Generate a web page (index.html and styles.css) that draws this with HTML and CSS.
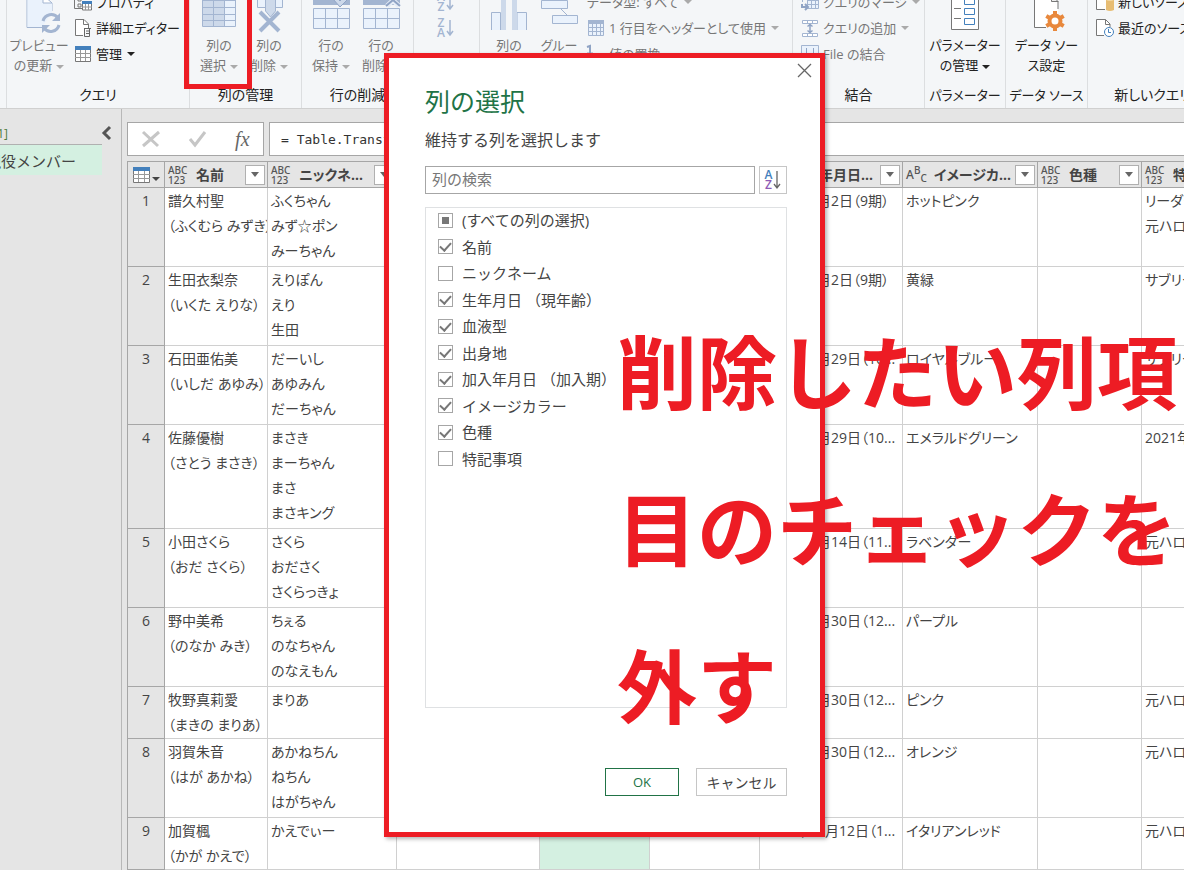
FILE: index.html
```html
<!DOCTYPE html>
<html lang="ja">
<head>
    <meta charset="UTF-8">
    <meta name="viewport" content="width=device-width, initial-scale=1.0">
    <title>Power Query エディター</title>
    <link rel="stylesheet" href="styles.css">
</head>
<body>
    <div class="ribbon">
        <div class="group group-query">
            <div class="group-body">
                <button class="big disabled">
                    <svg width="36" height="40" viewBox="0 0 36 40"><path d="M6 0V32.500H21M22 0v8h9v8" fill="#eaf2fc" stroke="#a3b5d1"/><path d="M6.500 0H22l9 8v10l-10 14H6.500z" fill="#eaf2fc"/><path d="M22 0L31 8H22z" fill="#fff" stroke="#a3b5d1"/><path d="M22 26a8.500 8.500 0 0 1 15-3M38 30a8.500 8.500 0 0 1-15 3" fill="none" stroke="#a3b5d1" stroke-width="3"/><path d="M39 18v8h-8zM21 38v-8h8z" fill="#a3b5d1"/></svg>
                    <span>プレビュー</span><span>の更新<i class="arrow"></i></span>
                </button>
                <div class="small-list">
                    <button class="small"><svg width="18" height="18" viewBox="0 0 18 18"><path d="M.5 0v15.500H8M4 5h3v3H4zM4 11h3v3H4z" fill="none" stroke="#777"/><path d="M8.500 9h9v8h-9z" fill="#fff" stroke="#777"/><path d="M8 8h10v3H8z" fill="#4380bc"/><path d="M11.500 11v6M14.500 11v6M8 14h10" stroke="#999"/></svg>プロパティ</button>
                    <button class="small"><svg width="18" height="18" viewBox="0 0 18 18"><path d="M9 16.500H1.500v-16H10L14.500 5v4" fill="#fff" stroke="#777"/><path d="M9.500.5v5h5" fill="none" stroke="#777"/><path d="M10 9.500h7M10.500 9.500v8h5v-8M12 12h3M12 14.500h3" fill="none" stroke="#666"/></svg>詳細エディター</button>
                    <button class="small"><svg width="18" height="18" viewBox="0 0 18 18"><path d="M1.500 1.500h15v15h-15z" fill="#fff" stroke="#777"/><path d="M1 1h16v4H1z" fill="#4380bc"/><path d="M6.500 5v11M11.500 5v11M1 8.500h16M1 12.500h16" stroke="#999"/></svg>管理<i class="arrow"></i></button>
                </div>
            </div>
            <div class="group-name">クエリ</div>
        </div>
        <div class="group group-columns">
            <div class="group-body">
                <button class="big disabled">
                    <svg width="36" height="40" viewBox="0 0 36 40"><path d="M1.500 0h33v31.500h-33z" fill="#eaf2fc"/><path d="M2 0h21v31H2z" fill="#cdd9ea"/><path d="M1.500 0v31.500h33V0M12.500 0v31M23.500 0v31M1 5.500h34M1 12.500h34M1 19.500h34M1 25.500h34" fill="none" stroke="#a3b5d1"/></svg>
                    <span>列の</span><span>選択<i class="arrow"></i></span>
                </button>
                <button class="big disabled">
                    <svg width="36" height="40" viewBox="0 0 36 40"><path d="M6.500 0v12.500h25V0" fill="#eaf2fc" stroke="#a3b5d1"/><path d="M14.500 0v16l5 6 5-6V0z" fill="#cdd9ea" stroke="#a3b5d1"/><path d="M9 17l19 19M28 17L9 36" stroke="#a3b5d1" stroke-width="4"/></svg>
                    <span>列の</span><span>削除<i class="arrow"></i></span>
                </button>
            </div>
            <div class="group-name">列の管理</div>
        </div>
        <div class="group group-rows">
            <div class="group-body">
                <button class="big disabled">
                    <svg width="38" height="40" viewBox="0 0 38 40"><path d="M1 0h37v10H1z" fill="#a3b5d1"/><path d="M21 4l7 8 8-8-3-3-5 5-4-4z" fill="#cdd9ea" stroke="#8fa3c4"/><path d="M1.500 13.500h36v20h-36zM13.500 13v20M25.500 13v20M1 23.500h37" fill="#eaf2fc" stroke="#a3b5d1"/></svg>
                    <span>行の</span><span>保持<i class="arrow"></i></span>
                </button>
                <button class="big disabled">
                    <svg width="38" height="40" viewBox="0 0 38 40"><path d="M1 0h37v10H1z" fill="#a3b5d1"/><path d="M25 11l12-11M25 0l12 11" stroke="#e6edf7" stroke-width="5"/><path d="M24 11l7-6 7 6" fill="none" stroke="#8fa3c4" stroke-width="2"/><path d="M1.500 13.500h36v20h-36zM13.500 13v20M25.500 13v20M1 23.500h37" fill="#eaf2fc" stroke="#a3b5d1"/></svg>
                    <span>行の</span><span>削除<i class="arrow"></i></span>
                </button>
            </div>
            <div class="group-name">行の削減</div>
        </div>
        <div class="group group-sort">
            <div class="group-body">
                <div class="sort-list">
                    <button class="sort disabled"><span class="az"><b>A</b><b>Z</b></span><svg width="8" height="18" viewBox="0 0 8 18"><path d="M4 1v15M1 12l3 4 3-4" fill="none" stroke="#a3b5d1" stroke-width="1.500"/></svg></button>
                    <button class="sort disabled"><span class="az"><b>Z</b><b>A</b></span><svg width="8" height="18" viewBox="0 0 8 18"><path d="M4 1v15M1 12l3 4 3-4" fill="none" stroke="#a3b5d1" stroke-width="1.500"/></svg></button>
                </div>
            </div>
            <div class="group-name"></div>
        </div>
        <div class="group group-transform">
            <div class="group-body">
                <button class="big disabled">
                    <svg width="38" height="40" viewBox="0 0 38 40"><path d="M1.500 35V17.500h9V35M27 35V17.500h9.500V35" fill="#eaf2fc" stroke="#a3b5d1"/><path d="M11 0h5v35h-5zM22 0h5v35h-5z" fill="#cdd9ea"/></svg>
                    <span>列の</span><span>分割<i class="arrow"></i></span>
                </button>
                <button class="big disabled">
                    <svg width="38" height="40" viewBox="0 0 38 40"><path d="M1.500 5.500h26v8h-26zM12.500 20.500h25v8h-25z" fill="#eaf2fc" stroke="#a3b5d1"/><path d="M21 14l6 6" stroke="#a3b5d1"/></svg>
                    <span>グルー</span><span>プ化</span>
                </button>
                <div class="small-list">
                    <button class="small disabled">データ型: すべて<i class="arrow"></i></button>
                    <button class="small disabled"><svg width="18" height="18" viewBox="0 0 18 18"><path d="M1.500 1.500h15v15h-15z" fill="#eaf2fc" stroke="#a3b5d1"/><path d="M1 1h16v4H1z" fill="#a3b5d1"/><path d="M5.500 5v11M9.500 5v11M13.500 5v11M1 8.500h16M1 12.500h16" stroke="#a3b5d1"/></svg>1 行目をヘッダーとして使用<i class="arrow"></i></button>
                    <button class="small disabled"><svg width="18" height="18" viewBox="0 0 18 18"><path d="M0 2l3-1v7M0 8.500h6" fill="none" stroke="#8fa3c4" stroke-width="2"/></svg>値の置換</button>
                </div>
            </div>
            <div class="group-name"></div>
        </div>
        <div class="group group-merge">
            <div class="group-body">
                <div class="small-list">
                    <button class="small disabled"><svg width="18" height="18" viewBox="0 0 18 18"><path d="M1.500 0v9M1 4.500h5M6.500 3.500h11v12h-11zM6 7.500h12M6 11.500h12M10.500 4v12M14.500 4v12" fill="#eaf2fc" stroke="#a3b5d1"/><path d="M1 11v3h6M4 11l3 3-3 3" fill="none" stroke="#8fa3c4" stroke-width="2"/></svg>クエリのマージ<i class="arrow"></i></button>
                    <button class="small disabled"><svg width="18" height="18" viewBox="0 0 18 18"><path d="M1.500 1.500h15v3h-15zM1.500 14.500h15v3h-15zM6.500 2v2M11.500 2v2M6.500 15v2M11.500 15v2" fill="#fff" stroke="#a3b5d1"/><path d="M9 5v9M6.500 7.500L9 5.500l2.500 2M6.500 11.500l2.500 2 2.500-2" fill="none" stroke="#8fa3c4" stroke-width="1.500"/></svg>クエリの追加<i class="arrow"></i></button>
                    <button class="small disabled"><svg width="18" height="18" viewBox="0 0 18 18"><path d="M.5.5h17v17H.5z" fill="#eaf2fc" stroke="#a3b5d1"/><path d="M5.500 3v6M12.500 3v6M5 9l4 3 4-3" fill="none" stroke="#8fa3c4"/></svg>File の結合</button>
                </div>
            </div>
            <div class="group-name">結合</div>
        </div>
        <div class="group group-parameter">
            <div class="group-body">
                <button class="big">
                    <svg width="36" height="40" viewBox="0 0 36 40"><path d="M4.500 0v34.500h27V0" fill="#fff" stroke="#777"/><path d="M7 13.500h7M7 23.500h7" stroke="#777"/><path d="M17.500 3.500h10v6h-10zM17.500 13.500h10v6h-10zM17.500 23.500h10v6h-10z" fill="#fff" stroke="#4380bc"/></svg>
                    <span>パラメーター</span><span>の管理<i class="arrow"></i></span>
                </button>
            </div>
            <div class="group-name">パラメーター</div>
        </div>
        <div class="group group-source">
            <div class="group-body">
                <button class="big">
                    <svg width="36" height="40" viewBox="0 0 36 40"><path d="M6 0h16v7h7v25H6z" fill="#fff"/><path d="M5.500 0v32.500H17M29 6v8" fill="none" stroke="#777"/><path d="M22.500 0v6.500H29z" fill="#eee" stroke="#777"/><circle cx="26" cy="26" r="5.500" fill="#fff" stroke="#e8883c" stroke-width="4"/><path d="M26 16v5M26 31v5M17.300 21l4.400 2.500M30.300 28.500l4.400 2.500M17.300 31l4.400-2.500M30.300 23.500l4.400-2.500" stroke="#e8883c" stroke-width="4"/></svg>
                    <span>データ ソー</span><span>ス設定</span>
                </button>
            </div>
            <div class="group-name">データ ソース</div>
        </div>
        <div class="group group-new">
            <div class="group-body">
                <div class="small-list">
                    <button class="small"><svg width="18" height="18" viewBox="0 0 18 18"><path d="M.5 0v16.500H9" fill="none" stroke="#777"/><path d="M1 0h11v16H1z" fill="#fff"/><path d="M10 5h8v12q-4 2-8 0z" fill="#e7bd74"/><ellipse cx="14" cy="6" rx="4" ry="2" fill="#f3d9a5"/></svg>新しいソース<i class="arrow"></i></button>
                    <button class="small"><svg width="18" height="18" viewBox="0 0 18 18"><path d="M8 16.500H.5V.5h9L14 5v3" fill="#fff" stroke="#777"/><path d="M9.500.5v5H14" fill="none" stroke="#777"/><circle cx="13" cy="13" r="4.500" fill="#fff" stroke="#4380bc"/><path d="M12.500 10v3.500H15" fill="none" stroke="#4380bc"/></svg>最近のソース<i class="arrow"></i></button>
                    <span class="small"></span>
                </div>
            </div>
            <div class="group-name">新しいクエリ</div>
        </div>
    </div>

    <div class="workspace">
        <div class="sidebar">
            <div class="query-folder"><span>クエリ [1]</span></div>
            <button class="collapse" aria-label="折りたたむ"><svg width="10" height="14" viewBox="0 0 10 14"><path d="M8 1L2 7l6 6" fill="none" stroke="#555" stroke-width="3"/></svg></button>
            <div class="query-item"><span>現役メンバー</span></div>
        </div>
        <div class="content">
            <div class="formula-bar">
                <div class="formula-tools">
                    <button aria-label="取り消し"><svg width="20" height="18" viewBox="0 0 20 18"><path d="M2 2l15 14M18 2L2 16" stroke="#c6c6c6" stroke-width="3"/></svg></button>
                    <button aria-label="確定"><svg width="20" height="18" viewBox="0 0 20 18"><path d="M2 9l5 6L17 2" fill="none" stroke="#c6c6c6" stroke-width="3"/></svg></button>
                    <button class="fx">fx</button>
                </div>
                <input class="formula" type="text" value="= Table.TransformColumns" aria-label="数式">
            </div>
            <table class="grid">
                <colgroup>
                    <col class="c-no"><col class="c-name"><col class="c-nick"><col class="c-date"><col class="c-mid"><col class="c-mid"><col class="c-date"><col class="c-image"><col class="c-color"><col class="c-mid">
                </colgroup>
                <thead>
                    <tr>
                        <th><div class="head corner"><svg width="17" height="16" viewBox="0 0 17 16"><path d="M.5.5h16v15H.5z" fill="#fff" stroke="#777"/><path d="M0 0h17v4H0z" fill="#4380bc"/><path d="M5.500 4v11M11.500 4v11M0 7.500h17M0 11.500h17" stroke="#999"/></svg><i class="arrow"></i></div></th>
                        <th><div class="head"><span class="type">ABC<br>123</span><span class="title">名前</span><button class="filter" aria-label="フィルター"></button></div></th>
                        <th><div class="head"><span class="type">ABC<br>123</span><span class="title">ニックネ...</span><button class="filter" aria-label="フィルター"></button></div></th>
                        <th><div class="head"></div></th>
                        <th><div class="head"></div></th>
                        <th><div class="head"></div></th>
                        <th><div class="head"><span class="type">ABC<br>123</span><span class="title">加入年月日...</span><button class="filter" aria-label="フィルター"></button></div></th>
                        <th><div class="head"><span class="type text">A<sup>B</sup><sub>C</sub></span><span class="title">イメージカ...</span><button class="filter" aria-label="フィルター"></button></div></th>
                        <th><div class="head"><span class="type">ABC<br>123</span><span class="title">色種</span><button class="filter" aria-label="フィルター"></button></div></th>
                        <th><div class="head"><span class="type">ABC<br>123</span><span class="title">特記事項</span></div></th>
                    </tr>
                </thead>
                <tbody>
                    <tr class="lines-3"><th>1</th><td>譜久村聖<br>（ふくむら みずき）</td><td>ふくちゃん<br>みず☆ポン<br>みーちゃん</td><td></td><td class="selected"></td><td></td><td>2011年1月2日（9期）</td><td>ホットピンク</td><td></td><td>リーダー<br>元ハロプロ</td></tr>
                    <tr class="lines-3"><th>2</th><td>生田衣梨奈<br>（いくた えりな）</td><td>えりぽん<br>えり<br>生田</td><td></td><td class="selected"></td><td></td><td>2011年1月2日（9期）</td><td>黄緑</td><td></td><td>サブリーダー</td></tr>
                    <tr class="lines-3"><th>3</th><td>石田亜佑美<br>（いしだ あゆみ）</td><td>だーいし<br>あゆみん<br>だーちゃん</td><td></td><td class="selected"></td><td></td><td>2011年9月29日（10...</td><td>ロイヤルブルー</td><td></td><td>サブリーダー</td></tr>
                    <tr class="lines-4"><th>4</th><td>佐藤優樹<br>（さとう まさき）</td><td>まさき<br>まーちゃん<br>まさ<br>まさキング</td><td></td><td class="selected"></td><td></td><td>2011年9月29日（10...</td><td>エメラルドグリーン</td><td></td><td>2021年</td></tr>
                    <tr class="lines-3"><th>5</th><td>小田さくら<br>（おだ さくら）</td><td>さくら<br>おださく<br>さくらっきょ</td><td></td><td class="selected"></td><td></td><td>2012年9月14日（11...</td><td>ラベンダー</td><td></td><td>元ハロプロ</td></tr>
                    <tr class="lines-3"><th>6</th><td>野中美希<br>（のなか みき）</td><td>ちぇる<br>のなちゃん<br>のなえもん</td><td></td><td class="selected"></td><td></td><td>2014年9月30日（12...</td><td>パープル</td><td></td><td></td></tr>
                    <tr class="lines-2"><th>7</th><td>牧野真莉愛<br>（まきの まりあ）</td><td>まりあ</td><td></td><td class="selected"></td><td></td><td>2014年9月30日（12...</td><td>ピンク</td><td></td><td>元ハロプロ</td></tr>
                    <tr class="lines-3"><th>8</th><td>羽賀朱音<br>（はが あかね）</td><td>あかねちん<br>ねちん<br>はがちゃん</td><td></td><td class="selected"></td><td></td><td>2014年9月30日（12...</td><td>オレンジ</td><td></td><td>元ハロプロ</td></tr>
                    <tr class="lines-2"><th>9</th><td>加賀楓<br>（かが かえで）</td><td>かえでぃー</td><td></td><td class="selected"></td><td></td><td>2016年12月12日（1...</td><td>イタリアンレッド</td><td></td><td>元ハロプロ</td></tr>
                </tbody>
            </table>
        </div>
    </div>

    <div class="marker"></div>

    <div class="dialog" role="dialog" aria-labelledby="dialogTitle">
        <button class="close" aria-label="閉じる"><svg width="15" height="15" viewBox="0 0 15 15"><path d="M1 1l13 13M14 1L1 14" stroke="#666" stroke-width="1.300"/></svg></button>
        <h1 id="dialogTitle">列の選択</h1>
        <p>維持する列を選択します</p>
        <div class="search-row">
            <input class="search" type="text" placeholder="列の検索" aria-label="列の検索">
            <button class="sort-button" aria-label="並べ替え"><span class="az"><b>A</b><b>Z</b></span><svg width="8" height="18" viewBox="0 0 8 18"><path d="M4 0v17M1 13l3 4 3-4" fill="none" stroke="#666" stroke-width="1.300"/></svg></button>
        </div>
        <div class="column-list">
            <ul>
                <li><label><input type="checkbox" class="partial">(すべての列の選択)</label></li>
                <li><label><input type="checkbox" checked>名前</label></li>
                <li><label><input type="checkbox">ニックネーム</label></li>
                <li><label><input type="checkbox" checked>生年月日 （現年齢）</label></li>
                <li><label><input type="checkbox" checked>血液型</label></li>
                <li><label><input type="checkbox" checked>出身地</label></li>
                <li><label><input type="checkbox" checked>加入年月日 （加入期）</label></li>
                <li><label><input type="checkbox" checked>イメージカラー</label></li>
                <li><label><input type="checkbox" checked>色種</label></li>
                <li><label><input type="checkbox">特記事項</label></li>
            </ul>
        </div>
        <div class="actions">
            <button class="ok">OK</button>
            <button class="cancel">キャンセル</button>
        </div>
    </div>

    <div class="note">削除したい列項<br>目のチェックを<br>外す</div>
</body>
</html>
```
FILE: styles.css
```css
* {
    box-sizing: border-box;
}

body {
    margin: 0;
    height: 100vh;
    overflow: hidden;
    position: relative;
    display: flex;
    flex-direction: column;
    background-color: #e5e5e5;
    color: #444;
    font-family: "Open Sans", "Noto Sans CJK JP", sans-serif;
    font-size: 15px;
}

button {
    padding: 0;
    border: none;
    background: none;
    color: inherit;
    font: inherit;
    cursor: pointer;
}

svg {
    display: block;
    flex: none;
    overflow: visible;
}

.arrow {
    display: inline-block;
    flex: none;
    border: 4px solid transparent;
    border-top-color: currentColor;
    border-bottom: none;
    margin-left: 4px;
    vertical-align: middle;
}

/* ribbon */
.ribbon {
    display: flex;
    flex: none;
    padding-left: 6px;
    background-color: #f4f6f8;
    border-bottom: 1px solid #d0d0d0;
    color: #222;
    font-size: 13px;
    font-feature-settings: "palt";
    white-space: nowrap;
    overflow: hidden;
}

.group {
    flex: none;
    height: 108px;
    border-left: 1px solid #dcdee0;
    overflow: hidden;
}

.group-body {
    display: flex;
    align-items: flex-end;
    height: 85px;
}

.group-name {
    line-height: 20px;
    font-size: 14px;
    text-align: center;
}

.group-query { width: 183px; }
.group-columns, .group-rows { width: 112px; }
.group-sort { width: 66px; }
.group-transform { width: 313px; }
.group-merge { width: 132px; }
.group-parameter { width: 81px; }
.group-source { width: 82px; }
.group-new { width: 130px; }

.group-parameter .group-name, .group-source .group-name {
    font-size: 13px;
}

.big {
    display: flex;
    flex-direction: column;
    align-items: center;
    width: 50px;
    padding-bottom: 10px;
    line-height: 20px;
}

.group-query .big {
    width: 64px;
}

.group-columns .group-body, .group-rows .group-body, .group-transform .group-body {
    padding-left: 4px;
}

.group-parameter .big, .group-source .big {
    width: 100%;
}

.small-list {
    padding-bottom: 18px;
    padding-left: 3px;
}

.group-merge .small-list, .group-new .small-list {
    padding-left: 8px;
}

.small {
    display: flex;
    align-items: center;
    height: 26px;
    gap: 4px;
    line-height: 20px;
}

.small .arrow {
    margin-left: 1px;
}

.disabled {
    color: #777;
}

.disabled .arrow {
    color: #aaa;
}

.sort-list {
    padding-left: 23px;
    padding-bottom: 44px;
}

.sort {
    display: flex;
    align-items: center;
    gap: 1px;
    height: 26px;
}

.sort .az {
    color: #a3b5d1;
}

.az {
    display: flex;
    flex-direction: column;
    font-size: 12px;
    line-height: 10px;
}

.az b {
    font-weight: 600;
}

/* workspace */
.workspace {
    display: flex;
    flex: 1;
    min-height: 0;
}

.sidebar {
    display: grid;
    grid-template-columns: 1fr 19px;
    grid-template-rows: 36px 30px;
    width: 122px;
    flex: none;
    border-right: 1px solid #b8b8b8;
}

.query-folder {
    display: flex;
    justify-content: flex-end;
    align-items: center;
    padding: 12px 94px 0 0;
    border-bottom: 1px solid #b0b0b0;
    color: #4f7d3c;
    font-size: 12px;
    white-space: nowrap;
    overflow: hidden;
}

.collapse {
    display: flex;
    align-items: center;
    padding: 12px 0 0;
}

.query-item {
    display: flex;
    justify-content: flex-end;
    align-items: center;
    padding-right: 26px;
    background-color: #d4f0e1;
    white-space: nowrap;
    overflow: hidden;
}

.content {
    flex: 1;
    min-width: 0;
    padding: 13px 0 0 5px;
    overflow: hidden;
}

.formula-bar {
    display: flex;
    gap: 5px;
    height: 34px;
    margin-bottom: 5px;
}

.formula-tools {
    display: flex;
    align-items: center;
    justify-content: space-around;
    width: 137px;
    background-color: #fff;
    border: 1px solid #a6a6a6;
}

.fx {
    font-family: "Liberation Serif", serif;
    font-style: italic;
    font-size: 20px;
    color: #666;
}

.formula {
    flex: 1;
    min-width: 0;
    padding: 0 11px;
    border: 1px solid #a6a6a6;
    border-right: none;
    background-color: #fff;
    color: #333;
    font-family: "DejaVu Sans Mono", monospace;
    font-size: 13px;
}

/* data grid */
.grid {
    table-layout: fixed;
    width: 1124px;
    border-collapse: separate;
    border-spacing: 0;
    font-size: 14px;
    font-feature-settings: "palt";
}

.c-no { width: 38px; }
.c-name { width: 103px; }
.c-nick { width: 129px; }
.c-date { width: 143px; }
.c-mid { width: 110px; }
.c-image { width: 135px; }
.c-color { width: 104px; }

.grid th, .grid td {
    padding: 0 0 0 3px;
    border-right: 1px solid #d0d0d0;
    border-bottom: 1px solid #d0d0d0;
    background-color: #fff;
    line-height: 25px;
    text-align: left;
    vertical-align: top;
    white-space: nowrap;
    overflow: hidden;
}

.grid thead th {
    border-top: 1px solid #a6a6a6;
    border-right-color: #a6a6a6;
    border-bottom-color: #a6a6a6;
    background-color: #e5e5e5;
}

.grid th:first-child {
    padding: 0;
    border-left: 1px solid #a6a6a6;
    border-right-color: #a6a6a6;
    border-bottom-color: #a6a6a6;
    background-color: #e5e5e5;
    font-weight: normal;
    text-align: center;
}

.grid .selected {
    background-color: #d4f0e1;
}

.lines-2 { height: 52px; }
.lines-3 { height: 79px; }
.lines-4 { height: 104px; }

.head {
    display: flex;
    align-items: center;
    height: 25px;
    padding-right: 2px;
}

.corner {
    justify-content: center;
    padding: 0;
}

.corner .arrow {
    margin: 8px 0 0 2px;
}

.type {
    flex: none;
    width: 28px;
    color: #555;
    font-family: "Noto Sans", sans-serif;
    font-size: 10px;
    font-weight: 500;
    line-height: 10px;
}

.type.text {
    font-size: 12px;
}

.type sup, .type sub {
    font-size: 10px;
    line-height: 0;
}

.title {
    flex: 1;
    font-size: 14px;
    overflow: hidden;
}

.filter {
    flex: none;
    display: flex;
    align-items: center;
    justify-content: center;
    width: 20px;
    height: 20px;
    background-color: #fff;
    border: 1px solid #b0b0b0;
}

.filter::after {
    content: "";
    border: 4px solid transparent;
    border-top: 5px solid #666;
    border-bottom: none;
}

/* red frame round the ribbon button */
.marker {
    position: absolute;
    left: 184px;
    top: -5px;
    width: 68px;
    height: 94px;
    border: 5px solid #ed1c24;
}

/* dialog */
.dialog {
    position: absolute;
    left: 384px;
    top: 53px;
    width: 441px;
    padding: 26px 33px 36px 36px;
    border: 5px solid #ed1c24;
    background-color: #fff;
    box-shadow: 2px 2px 4px rgba(0, 0, 0, 0.3);
}

.close {
    position: absolute;
    right: 8px;
    top: 5px;
}

.dialog h1 {
    margin: 0;
    color: #217346;
    font-size: 25px;
    font-weight: normal;
    line-height: 34px;
}

.dialog p {
    margin: 10px 0 13px;
    font-size: 16px;
    line-height: 25px;
}

.search-row {
    display: flex;
    gap: 4px;
    height: 28px;
    margin-bottom: 13px;
}

.search {
    flex: 1;
    min-width: 0;
    padding: 0 6px 2px;
    border: 1px solid #a6a6a6;
    font: inherit;
}

.search::placeholder {
    color: #777;
}

.sort-button {
    display: flex;
    align-items: center;
    justify-content: center;
    gap: 1px;
    width: 28px;
    border: 1px solid #c6c6c6;
}

.sort-button .az b {
    color: #4380bc;
}

.sort-button .az b:last-child {
    color: #8e5bb5;
}

.column-list {
    height: 501px;
    border: 1px solid #dfe1e3;
}

.column-list ul {
    display: flex;
    flex-direction: column;
    justify-content: space-between;
    height: 263px;
    margin: 0;
    padding: 0 0 0 12px;
    list-style: none;
}

.column-list label {
    display: flex;
    align-items: center;
    gap: 9px;
    line-height: 24px;
}

.column-list input {
    appearance: none;
    display: grid;
    place-items: center;
    width: 15px;
    height: 15px;
    margin: 0;
    border: 1px solid #a6a6a6;
    background-color: #fff;
}

.column-list input:checked::after {
    content: "";
    width: 5px;
    height: 9px;
    margin-bottom: 2px;
    border: solid #777;
    border-width: 0 2px 2px 0;
    transform: rotate(42deg);
}

.column-list .partial::after {
    content: "";
    width: 7px;
    height: 7px;
    background-color: #777;
}

.actions {
    display: flex;
    justify-content: flex-end;
    gap: 17px;
    margin-top: 60px;
}

.actions button {
    height: 28px;
    border: 1px solid #c6c6c6;
}

.actions .ok {
    width: 74px;
    border-color: #217346;
    color: #217346;
    font-size: 13px;
}

.actions .cancel {
    width: 91px;
    font-size: 14px;
}

.note {
    position: absolute;
    left: 617px;
    top: 290px;
    color: #ed1c24;
    font-family: "Noto Sans CJK JP", sans-serif;
    font-size: 80px;
    font-weight: bold;
    line-height: 157px;
    white-space: nowrap;
}
```
